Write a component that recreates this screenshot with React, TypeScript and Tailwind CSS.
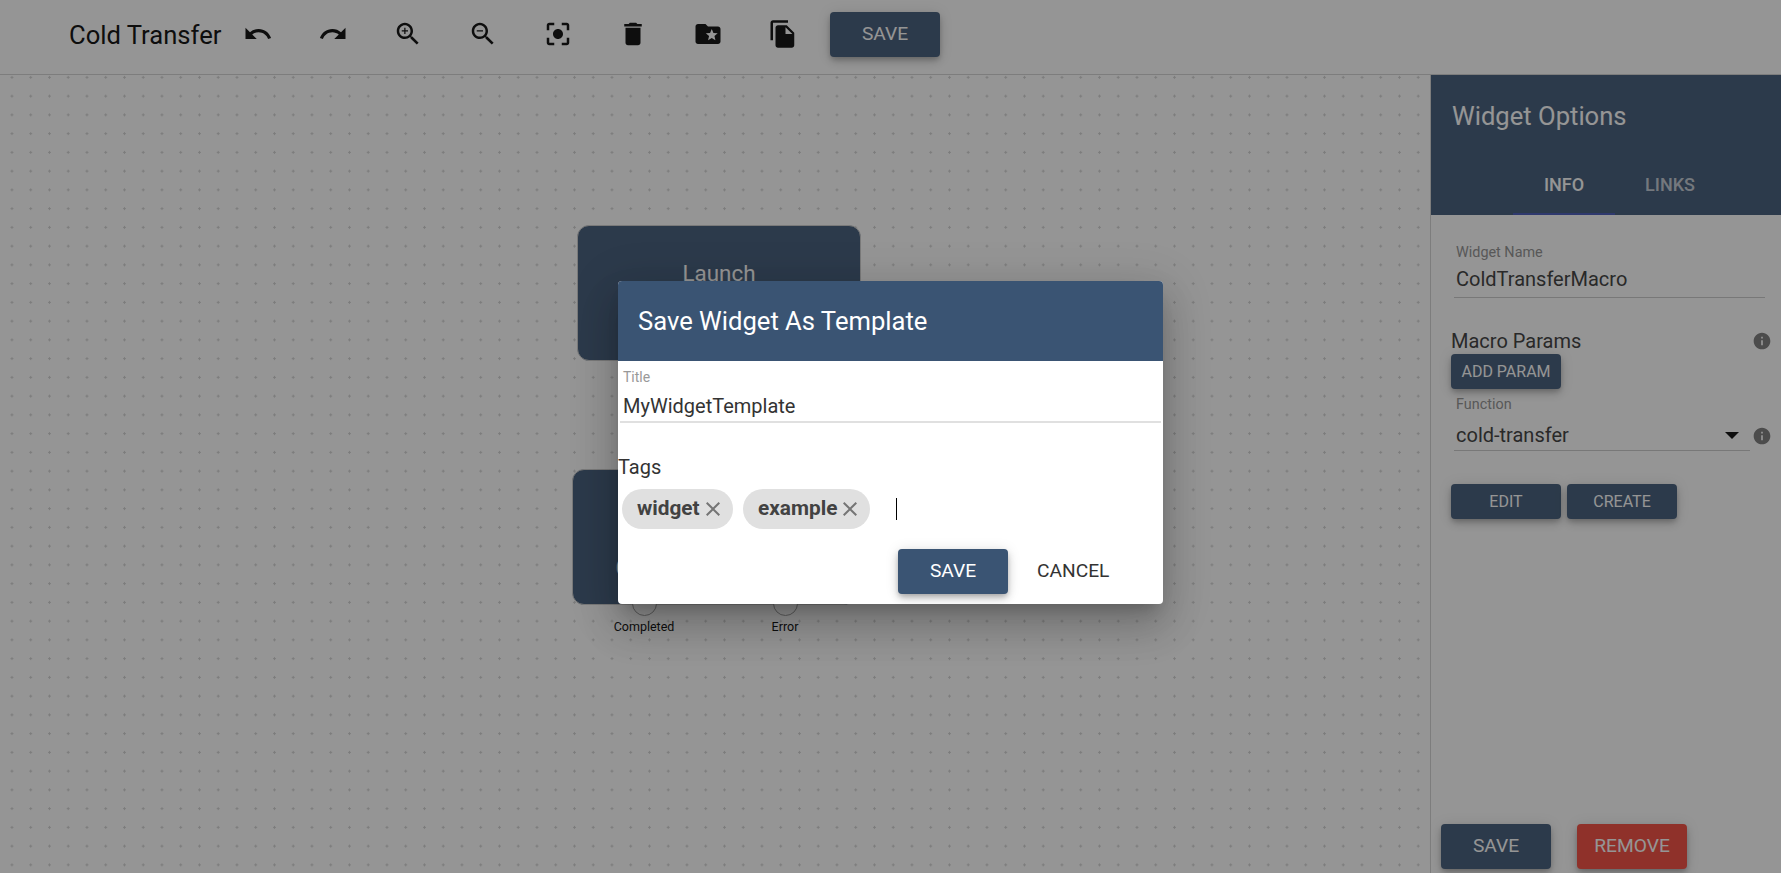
const font = 'font-["Roboto","Liberation_Sans",Arial,sans-serif]';

const toolbarIcons = [
  'M12.5 8c-2.65 0-5.05.99-6.9 2.6L2 7v9h9l-3.62-3.62c1.39-1.16 3.16-1.88 5.12-1.88 3.54 0 6.55 2.31 7.6 5.5l2.37-.78C21.08 11.03 17.15 8 12.5 8z',
  'M18.4 10.6C16.55 8.99 14.15 8 11.5 8c-4.65 0-8.58 3.03-9.96 7.22L3.9 16c1.05-3.19 4.05-5.5 7.6-5.5 1.95 0 3.73.72 5.12 1.88L13 16h9V7l-3.6 3.6z',
  'M15.5 14h-.79l-.28-.27C15.41 12.59 16 11.11 16 9.5 16 5.91 13.09 3 9.5 3S3 5.91 3 9.5 5.91 16 9.5 16c1.61 0 3.09-.59 4.23-1.57l.27.28v.79l5 4.99L20.49 19l-4.99-5zm-6 0C7.01 14 5 11.99 5 9.5S7.01 5 9.5 5 14 7.01 14 9.5 11.99 14 9.5 14zM12 10h-2v2H9v-2H7V9h2V7h1v2h2v1z',
  'M15.5 14h-.79l-.28-.27C15.41 12.59 16 11.11 16 9.5 16 5.91 13.09 3 9.5 3S3 5.91 3 9.5 5.91 16 9.5 16c1.61 0 3.09-.59 4.23-1.57l.27.28v.79l5 4.99L20.49 19l-4.99-5zm-6 0C7.01 14 5 11.99 5 9.5S7.01 5 9.5 5 14 7.01 14 9.5 11.99 14 9.5 14zM7 9h5v1H7z',
  'M12 8c-2.21 0-4 1.79-4 4s1.79 4 4 4 4-1.79 4-4-1.79-4-4-4zm-7 7H3v4c0 1.1.9 2 2 2h4v-2H5v-4zM5 5h4V3H5c-1.1 0-2 .9-2 2v4h2V5zm14-2h-4v2h4v4h2V5c0-1.1-.9-2-2-2zm0 16h-4v2h4c1.1 0 2-.9 2-2v-4h-2v4z',
  'M6 19c0 1.1.9 2 2 2h8c1.1 0 2-.9 2-2V7H6v12zM19 4h-3.5l-1-1h-5l-1 1H5v2h14V4z',
  'M20 6h-8l-2-2H4c-1.1 0-1.99.9-1.99 2L2 18c0 1.1.9 2 2 2h16c1.1 0 2-.9 2-2V8c0-1.1-.9-2-2-2zm-2.06 11L15 15.28 12.06 17l.78-3.33-2.59-2.24 3.41-.29L15 8l1.34 3.14 3.41.29-2.59 2.24.78 3.33z',
  'M16 1H4c-1.1 0-2 .9-2 2v14h2V3h12V1zm-1 4l6 6v10c0 1.1-.9 2-2 2H7.99C6.89 23 6 22.1 6 21l.01-14c0-1.1.89-2 1.99-2h7zm-1 7h5.5L14 6.5V12z',
];

const raised = 'shadow-[0_3px_5px_-1px_rgba(0,0,0,0.2),0_5px_8px_0_rgba(0,0,0,0.14),0_1px_14px_0_rgba(0,0,0,0.12)]';

function Btn({ label, className }: { label: string; className: string }) {
  return (
    <button className={`flex items-center justify-center rounded-[4px] uppercase text-white ${raised} ${className}`}>
      {label}
    </button>
  );
}

function InfoIcon() {
  return (
    <svg viewBox="0 0 24 24" className="w-5 h-5 fill-[#757575] shrink-0">
      <path d="M12 2C6.48 2 2 6.48 2 12s4.48 10 10 10 10-4.48 10-10S17.52 2 12 2zm1 15h-2v-6h2v6zm0-8h-2V7h2v2z" />
    </svg>
  );
}

function Chip({ label, width }: { label: string; width: string }) {
  return (
    <div className={`flex items-center h-10 rounded-[20px] bg-[#e0e0e0] pl-[15px] text-[20.8px] font-bold text-[#424242] ${width}`}>
      {label}
      <svg viewBox="0 0 24 24" className="w-[24px] h-[24px] ml-px fill-[#757575]">
        <path d="M19 6.41 17.59 5 12 10.59 6.41 5 5 6.41 10.59 12 5 17.59 6.41 19 12 13.41 17.59 19 19 17.59 13.41 12z" />
      </svg>
    </div>
  );
}

function Port({ label, className }: { label: string; className: string }) {
  return (
    <div className={`absolute top-[516px] flex flex-col items-center w-20 ${className}`}>
      <div className="w-[25px] h-[25px] rounded-full border border-[#999] bg-white" />
      <span className="mt-[2px] text-[12.5px] text-black">{label}</span>
    </div>
  );
}

export default function App() {
  return (
    <div className={`relative h-[873px] overflow-hidden bg-white flex flex-col ${font}`}>
      <header className="h-[75px] shrink-0 flex items-center border-b border-[#d2d2d2] pl-[69px]">
        <h1 className="w-[174px] text-[25.6px] font-normal text-black -mt-[4px]">Cold Transfer</h1>
        <div className="flex items-center gap-[45px] -mt-[6px]">
          {toolbarIcons.map((d) => (
            <svg key={d} viewBox="0 0 24 24" className="w-[30px] h-[30px] fill-black">
              <path d={d} />
            </svg>
          ))}
        </div>
        <Btn label="Save" className="w-[110px] h-[45px] ml-[32px] -mt-[5px] bg-[#3a5473] text-[19.2px]" />
      </header>

      <div className="flex flex-1 min-h-0">
        <main className="relative flex-1 bg-[radial-gradient(circle,#d0d0d0_1px,transparent_1.2px)] bg-[size:18.75px_18.75px] bg-[position:2.6px_-7px]">
          <div className="absolute left-[577px] top-[150px] w-[284px] h-[136px] rounded-[12px] border border-[#ccc] bg-[#3a5473] flex justify-center pt-[31px] text-[22.4px] text-white">
            Launch
          </div>
          <div className="absolute left-[572px] top-[394px] w-[284px] h-[136px] rounded-[12px] border border-[#ccc] bg-[#3a5473] flex justify-center pt-[82px] text-[23px] text-white">
            ColdTransferMacro
          </div>
          <Port label="Completed" className="left-[604px]" />
          <Port label="Error" className="left-[745px]" />
        </main>

        <aside className="w-[351px] shrink-0 border-l border-[#d2d2d2] flex flex-col">
          <div className="h-[140px] bg-[#3a5473] shrink-0 flex flex-col">
            <div className="pl-[21px] pt-[26px] text-[25.6px] text-white leading-[30px]">Widget Options</div>
            <div className="flex mt-[24px] ml-[82px] h-[60px]">
              <div className="w-[102px] h-[60px] flex justify-center pt-[16px] text-[18px] font-medium text-white border-b-2 border-[#3f51b5]">INFO</div>
              <div className="w-[110px] h-[60px] flex justify-center pt-[16px] text-[18px] font-medium text-white/70">LINKS</div>
            </div>
          </div>

          <div className="flex-1 flex flex-col px-5 min-h-0">
            <div className="mt-[30px] ml-[3px] mr-[-4px] border-b border-[#c8c8c8] h-[53px] pl-[2px]">
              <div className="text-[14.4px] leading-4 text-[#8c8c8c]">Widget Name</div>
              <div className="mt-[6px] text-[20px] leading-6 text-[#333]">ColdTransferMacro</div>
            </div>
            <div className="mt-[31px] flex items-center justify-between mr-[-11px] h-6 text-[20px] text-[#333]">
              Macro Params
              <InfoIcon />
            </div>
            <Btn label="Add Param" className="w-[110px] h-[35px] mt-[1px] text-[16px] bg-[#3a5473]" />
            <div className="flex items-end mr-[-11px] mt-[8px]">
              <div className="flex-1 ml-[3px] border-b border-[#c8c8c8] h-[54px] pl-[2px] relative">
                <div className="text-[14.4px] leading-4 text-[#8c8c8c]">Function</div>
                <div className="mt-[10px] text-[20px] leading-6 text-[#333]">cold-transfer</div>
                <div className="absolute right-[11px] top-[35px] w-0 h-0 border-x-[7px] border-x-transparent border-t-[7px] border-t-black" />
              </div>
              <span className="ml-[2px] mb-[5px]"><InfoIcon /></span>
            </div>
            <div className="flex gap-[6px] mt-[33px]">
              <Btn label="Edit" className="w-[110px] h-[35px] text-[16px] bg-[#3a5473]" />
              <Btn label="Create" className="w-[110px] h-[35px] text-[16px] bg-[#3a5473]" />
            </div>
            <div className="mt-auto mb-[4px] ml-[-10px] flex gap-[26px]">
              <Btn label="Save" className="w-[110px] h-[45px] text-[19.2px] bg-[#3a5473]" />
              <Btn label="Remove" className="w-[110px] h-[45px] text-[19.2px] bg-[#f44336]" />
            </div>
          </div>
        </aside>
      </div>

      {/* dimmed backdrop + dialog */}
      <div className="absolute inset-0 bg-[rgba(30,30,30,0.47)] flex items-center justify-center">
        <div className="w-[545px] h-[323px] mt-[12px] rounded-[4px] bg-white overflow-hidden shadow-[0_11px_15px_-7px_rgba(0,0,0,0.2),0_24px_38px_3px_rgba(0,0,0,0.14),0_9px_46px_8px_rgba(0,0,0,0.12)] flex flex-col">
          <div className="h-[80px] shrink-0 bg-[#3a5473] flex items-center pl-5 text-[25.6px] text-white">
            Save Widget As Template
          </div>
          <div className="mx-[2px] h-[62px] border-b-2 border-[#e0e0e0] pl-[3px] pt-[8px]">
            <div className="text-[14px] leading-4 text-[#999]">Title</div>
            <div className="mt-[9px] text-[20px] leading-6 text-[#333]">MyWidgetTemplate</div>
          </div>
          <div className="mt-[32px] text-[20px] leading-6 text-[#333]">Tags</div>
          <div className="flex items-center mt-[10px] ml-[4px] gap-[10px]">
            <Chip label="widget" width="w-[111px]" />
            <Chip label="example" width="w-[127px]" />
            <div className="ml-4 w-px h-[22px] bg-black" />
          </div>
          <div className="flex items-center mt-[20px] ml-[280px]">
            <Btn label="Save" className="w-[110px] h-[45px] text-[19.2px] bg-[#3a5473]" />
            <span className="ml-[29px] text-[19.2px] text-[#333]">CANCEL</span>
          </div>
        </div>
      </div>
    </div>
  );
}
